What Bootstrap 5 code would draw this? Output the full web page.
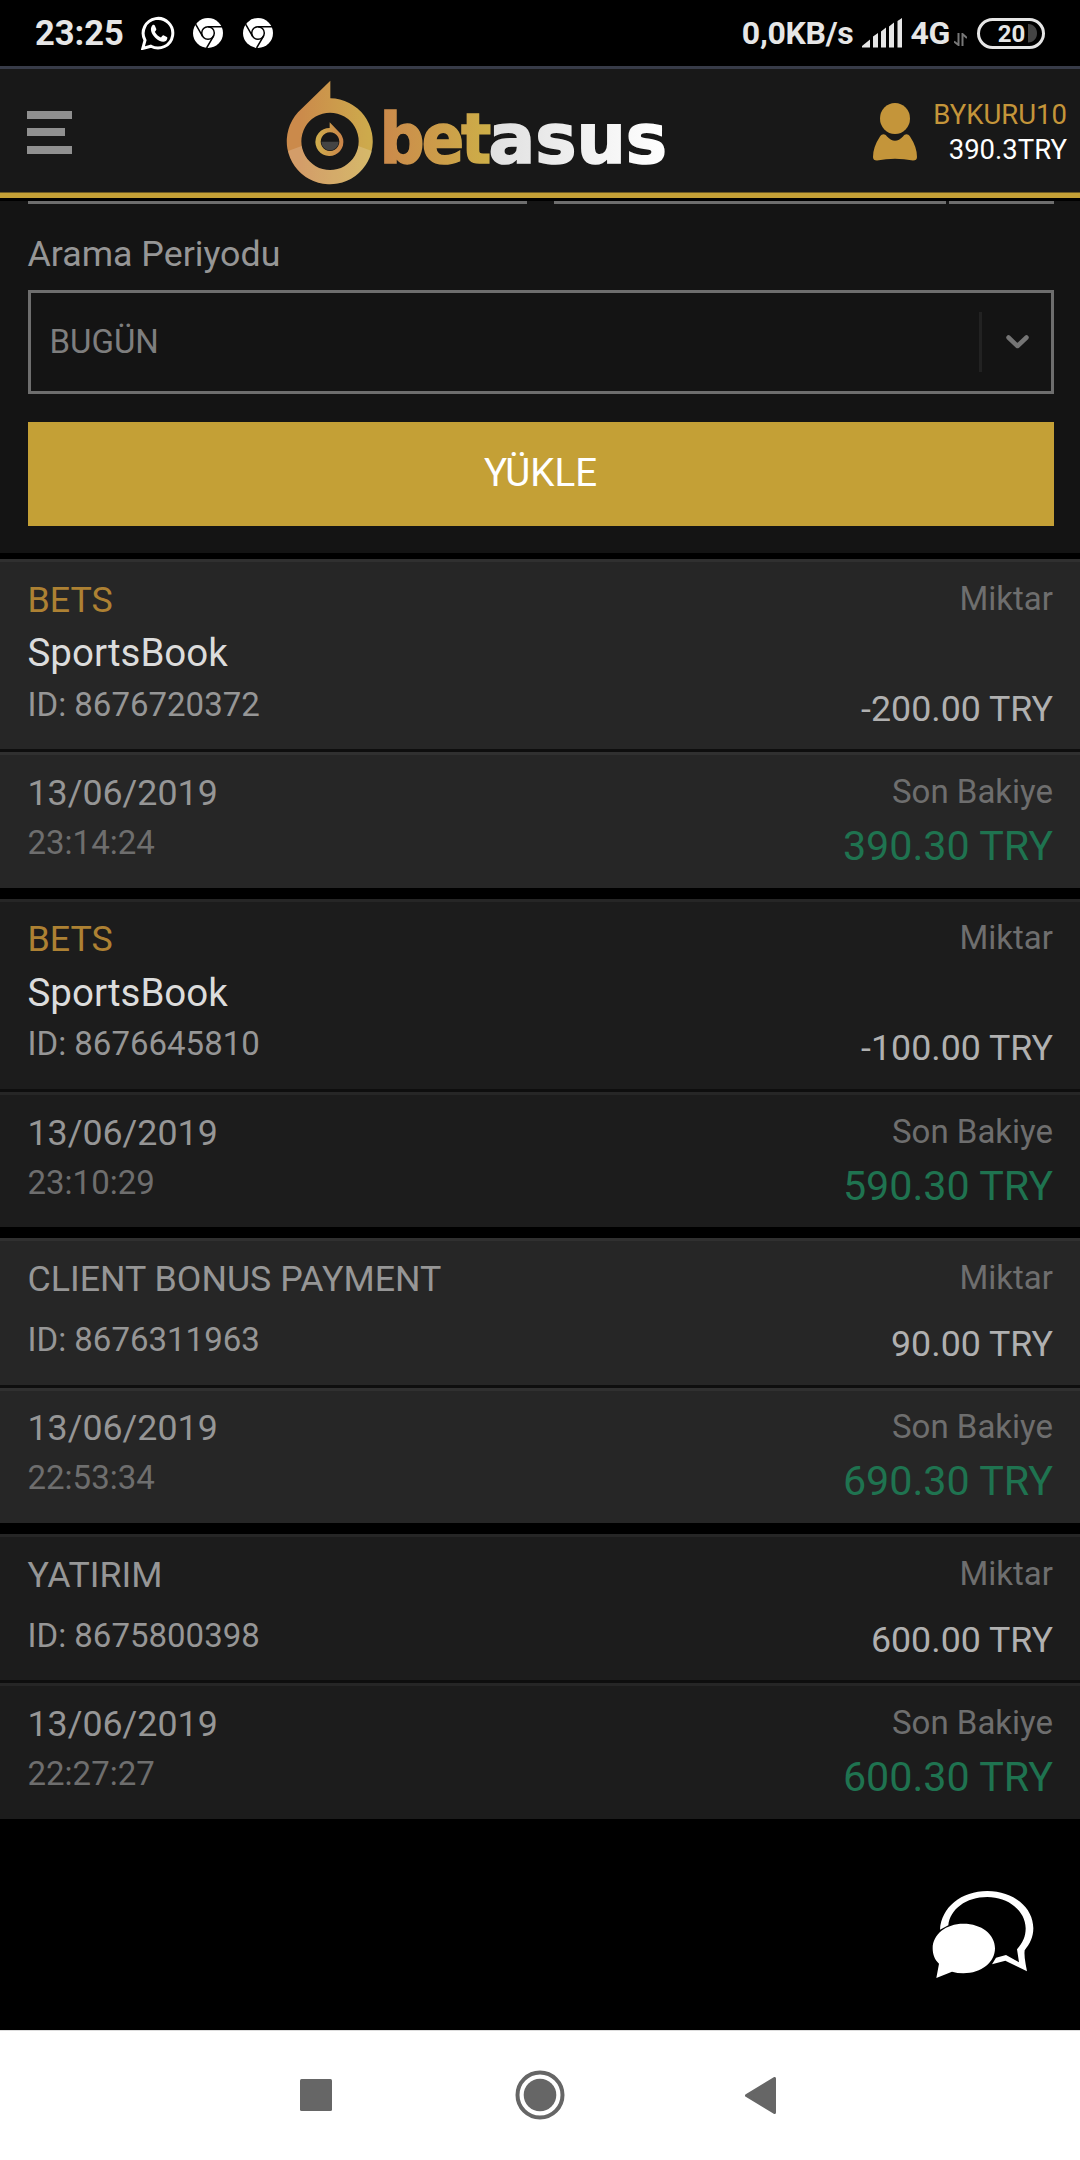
<!DOCTYPE html>
<html lang="tr">
<head>
<meta charset="utf-8">
<meta name="viewport" content="width=device-width, initial-scale=1">
<title>betasus</title>
<link href="https://cdn.jsdelivr.net/npm/bootstrap@5.3.0/dist/css/bootstrap.min.css" rel="stylesheet">
<style>
  body { font-family: Roboto, "Noto Sans", sans-serif; background: #000; width: 1080px; height: 2160px; overflow: hidden; }
  svg { display: block; flex: none; }
  .status { height: 66px; color: #e6e6e6; font-weight: 700; padding: 0 35px 0 35px; }
  .clock { font-size: 34.5px; line-height: 68px; }
  .rate { font-size: 32px; line-height: 69px; letter-spacing: -.3px; }
  .topbar { height: 132px; background: #181818; border-top: 3px solid #373b48; border-bottom: 5px solid #c4a036; box-shadow: inset 0 -1px #6b5a26; padding: 2px 13px 0 27px; }
  .burger { width: 45px; gap: 9.5px; }
  .burger span { height: 8px; background: #909090; }
  .burger span:nth-child(2) { width: 38px; }
  .account { font-size: 27.5px; line-height: 35px; color: #fff; }
  .account b { color: #c4953a; font-weight: 400; }
  .filters { height: 352px; background: #141414; margin-top: 3px; padding: 0 26px 0 28px; }
  .cut { height: 3px; background: #6e6e6e; }
  .period-label { font-size: 35.75px; line-height: 48px; color: #969696; margin: 26px 0 12px -.5px; }
  .picker { height: 104px; border: 3px solid #6e6e6e; font-size: 33px; line-height: 46px; color: #7e7e7e; padding: 0 22px 0 18.5px; }
  .picker-rule { width: 3px; height: 60px; background: #222; margin-right: 24px; }
  .btn-load { height: 104px; margin-top: 28px; background: #c4a036 !important; color: #fff !important; font-size: 38.5px; line-height: 46px; border: 0; border-radius: 0; padding: 0 1px 2px 0; }
  .records { padding-top: 6px; }
  .rec { --face: #262626; --edge: #303030; margin-bottom: 11px; }
  .rec:nth-child(even) { --face: #1c1c1c; --edge: #262626; }
  .half { background: var(--face); border-top: 3px solid var(--edge); padding: 14px 27px 0 27.5px; }
  .half.head { height: 193px; border-bottom: 3px solid #0e0e0e; padding-bottom: 22px; }
  .half.foot { height: 136px; }
  .kind { font-size: 35.75px; line-height: 48px; color: #969696; }
  .kind.gold { color: #ad8133; }
  .book { font-size: 38.5px; line-height: 58px; color: #dcdcdc; }
  .rid { font-size: 33px; line-height: 45px; color: #969696; margin-top: auto; }
  .cap { font-size: 33px; line-height: 45px; color: #6e6e6e; }
  .sum { font-size: 35.75px; line-height: 36px; color: #b0b0b0; }
  .day { font-size: 35.75px; line-height: 48px; color: #969696; }
  .hour { font-size: 33px; line-height: 51px; color: #6e6e6e; }
  .total { font-size: 41.25px; line-height: 64px; color: #1f7350; }
  .plain .half.head { height: 150px; padding-bottom: 23px; }
  .rec:nth-child(2) .head { padding-top: 13px; padding-bottom: 23px; }
  .rec:nth-child(2) .book { line-height: 59px; }
  .rec:nth-child(2) .rid { line-height: 44px; }
  .rec:nth-child(2) .foot { height: 135px; }
  .rec:nth-child(3) .foot { height: 135px; padding-top: 13px; }
  .rec.plain:nth-child(4) .head { height: 149px; padding-bottom: 22px; }
  .chat { position: fixed; left: 932px; top: 1890px; }
  .softkeys { position: fixed; left: 0; right: 0; bottom: 0; height: 130px; background: #fff; border-top: 1px solid #ddd; padding: 0 304px 1px 300px; }
</style>
</head>
<body>
<div class="status d-flex align-items-center">
  <span class="clock">23:25</span>
  <svg style="margin-left:17px" width="34" height="34" viewBox="0 0 34 34"><path d="M1.8 32.4 4 24.3A14.8 14.8 0 1 1 9.900 30.200Z" fill="none" stroke="#fff" stroke-width="3"/><path d="M11.400 9.300c.8-.8 2-.6 2.400.3l1.500 3.300c.3.8-.9 2.300-1.500 2.800 1.300 2.700 3.400 4.600 6.200 5.700.8-.6 1.600-2.300 2.500-2.100l3.300 1.600c1.300.7.100 3.200-1 4-2.500 1.800-7 .2-10.600-3.200C10.700 18.500 8.200 12.800 11.400 9.300Z" fill="#fff"/></svg>
  <svg style="margin-left:18px" width="30" height="30" viewBox="0 0 30 30"><circle cx="15" cy="15" r="15" fill="#fff"/><circle cx="15" cy="15" r="6.300" fill="none" stroke="#000" stroke-width="1.500"/><path d="M15 8.700H29M9.500 18.100 2.600 6.200M20.500 18.100 13.600 30" stroke="#000" stroke-width="1.500" fill="none"/></svg>
  <svg style="margin-left:20px" width="30" height="30" viewBox="0 0 30 30"><circle cx="15" cy="15" r="15" fill="#fff"/><circle cx="15" cy="15" r="6.300" fill="none" stroke="#000" stroke-width="1.500"/><path d="M15 8.700H29M9.500 18.100 2.600 6.200M20.500 18.100 13.600 30" stroke="#000" stroke-width="1.500" fill="none"/></svg>
  <div class="ms-auto d-flex align-items-center">
    <span class="rate">0,0KB/s</span>
    <svg style="margin-left:9px" width="41" height="30" viewBox="0 0 41 30" fill="#e6e6e6"><path d="M0 29.500V28l8-6.500v8ZM11 18.500l5-3.500v14.500h-5ZM19 13.500l5-4v20h-5ZM27 8.500l5-4v25h-5ZM35.500 3l4.500-3v29.500h-4.500Z"/></svg>
    <span class="rate" style="margin-left:7px">4G</span>
    <svg style="margin:13px 10px 0 4px" width="13" height="13" viewBox="0 0 13 13"><path d="M4.500 0v12L0 8.500M8.500 13V1l4.500 4" fill="none" stroke="#777" stroke-width="2"/></svg>
    <svg width="68" height="31" viewBox="0 0 68 31"><rect x="1.500" y="1.500" width="65" height="28" rx="14" fill="none" stroke="#e6e6e6" stroke-width="3"/><path d="M51 6c12 0 12 18.500 0 18.500Z" fill="#444"/><text x="34.500" y="24" font-size="24" font-weight="700" text-anchor="middle" fill="#e6e6e6">20</text></svg>
  </div>
</div>

<header class="topbar">
  <div class="h-100 d-flex align-items-center">
  <div class="burger d-flex flex-column"><span></span><span></span><span></span></div>
  <svg style="margin-left:198px" width="410" height="122" viewBox="0 0 1230 366">
    <defs>
      <linearGradient id="ring" x1="0" x2="1" y1="0" y2="0"><stop offset=".15" stop-color="#cb8a4b"/><stop offset=".95" stop-color="#cdaa4c"/></linearGradient>
      <linearGradient id="ringIn" x1="0" x2="1" y1="0" y2="0"><stop offset="0" stop-color="#cfae4d"/><stop offset="1" stop-color="#cb8449"/></linearGradient>
      <linearGradient id="gold" gradientUnits="userSpaceOnUse" x1="343" x2="657" y1="0" y2="0"><stop offset="0" stop-color="#cb8a4b"/><stop offset="1" stop-color="#cdae48"/></linearGradient>
      <linearGradient id="silver" gradientUnits="userSpaceOnUse" x1="660" x2="1190" y1="0" y2="0"><stop offset="0" stop-color="#e0e0e0"/><stop offset="1" stop-color="#fff"/></linearGradient>
      <clipPath id="lower"><path d="M40 245 95 225Q180 245 265 225L320 245V366H40Z"/></clipPath>
    </defs>
    <path fill="url(#ring)" fill-rule="evenodd" d="M181 29V82A129 129 0 1 1 84 124ZM180 125a86 86 0 1 0 .1 0Z"/>
    <path fill="#fff" fill-opacity=".17" fill-rule="evenodd" clip-path="url(#lower)" d="M180 82a129 129 0 1 0 .1 0ZM180 125a86 86 0 1 0 .1 0Z"/>
    <path fill="url(#ringIn)" fill-rule="evenodd" d="M179 154 212 188A42 42 0 1 1 179 171ZM180 184a28 28 0 1 0 .1 0Z"/>
    <path fill="#444" d="M154 212H206A26 26 0 0 1 154 212Z"/>
    <text x="329" y="275" font-family="DejaVu Sans" font-weight="700" font-size="208" stroke-width="5"><tspan font-stretch="condensed" font-family="DejaVu Sans Condensed, DejaVu Sans" letter-spacing="-8" fill="url(#gold)" stroke="url(#gold)">bet</tspan><tspan fill="url(#silver)" stroke="url(#silver)">asus</tspan></text>
  </svg>
  <div class="ms-auto d-flex align-items-center">
    <svg style="margin-right:16px" width="44" height="58" viewBox="0 0 44 58" fill="#c4953a"><ellipse cx="22" cy="15.500" rx="15" ry="15.500"/><path d="M7 33.500C9 30.500 12 30.500 14 33.500Q22 42 30 33.500C32 30.500 35 30.500 37 33.500Q44 44 44 54 44 57.500 40 57.500 22 54 4 57.500 0 57.500 0 54 0 44 7 33.500Z"/></svg>
    <div class="account text-end"><b>BYKURU10</b><br>390.3TRY</div>
  </div>
  </div>
</header>

<main>
  <form class="filters">
    <div class="d-flex">
      <div class="cut" style="width:499px"></div>
      <div class="cut" style="width:392px;margin-left:27px"></div>
      <div class="cut flex-grow-1" style="margin-left:3px"></div>
    </div>
    <label class="period-label d-block">Arama Periyodu</label>
    <div class="picker d-flex align-items-center">
      <span class="me-auto">BUGÜN</span>
      <span class="picker-rule"></span>
      <svg width="23" height="14" viewBox="0 0 23 14"><path d="M2.500 2.500 11.500 11 20.500 2.500" fill="none" stroke="#757575" stroke-width="4.500" stroke-linecap="round" stroke-linejoin="round"/></svg>
    </div>
    <button type="button" class="btn btn-load w-100">YÜKLE</button>
  </form>

  <section class="records">
    <article class="rec">
      <div class="half head d-flex justify-content-between">
        <div class="d-flex flex-column"><div class="kind gold">BETS</div><div class="book">SportsBook</div><div class="rid">ID: 8676720372</div></div>
        <div class="d-flex flex-column justify-content-between text-end"><div class="cap">Miktar</div><div class="sum">-200.00 TRY</div></div>
      </div>
      <div class="half foot d-flex justify-content-between">
        <div><div class="day">13/06/2019</div><div class="hour">23:14:24</div></div>
        <div class="text-end"><div class="cap">Son Bakiye</div><div class="total">390.30 TRY</div></div>
      </div>
    </article>
    <article class="rec">
      <div class="half head d-flex justify-content-between">
        <div class="d-flex flex-column"><div class="kind gold">BETS</div><div class="book">SportsBook</div><div class="rid">ID: 8676645810</div></div>
        <div class="d-flex flex-column justify-content-between text-end"><div class="cap">Miktar</div><div class="sum">-100.00 TRY</div></div>
      </div>
      <div class="half foot d-flex justify-content-between">
        <div><div class="day">13/06/2019</div><div class="hour">23:10:29</div></div>
        <div class="text-end"><div class="cap">Son Bakiye</div><div class="total">590.30 TRY</div></div>
      </div>
    </article>
    <article class="rec plain">
      <div class="half head d-flex justify-content-between">
        <div class="d-flex flex-column"><div class="kind">CLIENT BONUS PAYMENT</div><div class="rid">ID: 8676311963</div></div>
        <div class="d-flex flex-column justify-content-between text-end"><div class="cap">Miktar</div><div class="sum">90.00 TRY</div></div>
      </div>
      <div class="half foot d-flex justify-content-between">
        <div><div class="day">13/06/2019</div><div class="hour">22:53:34</div></div>
        <div class="text-end"><div class="cap">Son Bakiye</div><div class="total">690.30 TRY</div></div>
      </div>
    </article>
    <article class="rec plain">
      <div class="half head d-flex justify-content-between">
        <div class="d-flex flex-column"><div class="kind">YATIRIM</div><div class="rid">ID: 8675800398</div></div>
        <div class="d-flex flex-column justify-content-between text-end"><div class="cap">Miktar</div><div class="sum">600.00 TRY</div></div>
      </div>
      <div class="half foot d-flex justify-content-between">
        <div><div class="day">13/06/2019</div><div class="hour">22:27:27</div></div>
        <div class="text-end"><div class="cap">Son Bakiye</div><div class="total">600.30 TRY</div></div>
      </div>
    </article>
  </section>
</main>

<svg class="chat" width="102" height="90" viewBox="96 90 306 270">
  <path fill="#fff" d="M190 191C245 191 285 223 285 265S245 340 190 340Q172 340 156 335L109 354 117 311C104 299 98 284 98 265 98 223 138 191 190 191Z"/>
  <path fill="#fff" d="M120 209C124 142 184 93 262 93S400 142 400 205C400 232 389 252 374 271Q371 285 381 334L316 302 276 313 288 293 318 285 357 307 351 268C369 248 377 230 377 205 377 153 325 111 262 111 198 111 150 148 145 196Z"/>
</svg>

<nav class="softkeys d-flex align-items-center justify-content-between">
  <svg width="32" height="32" viewBox="0 0 32 32"><rect width="32" height="32" rx="1.500" fill="#666"/></svg>
  <svg style="margin-left:3px" width="50" height="50" viewBox="0 0 50 50"><circle cx="25" cy="25" r="22.500" fill="none" stroke="#666" stroke-width="4"/><circle cx="25" cy="25" r="16.300" fill="#666"/></svg>
  <svg width="31" height="37" viewBox="0 0 31 37"><path d="M1.500 18.500 29.500 1.500V35.500Z" fill="#666" stroke="#666" stroke-width="3" stroke-linejoin="round"/></svg>
</nav>
<script src="https://cdn.jsdelivr.net/npm/bootstrap@5.3.0/dist/js/bootstrap.bundle.min.js"></script>
</body>
</html>
